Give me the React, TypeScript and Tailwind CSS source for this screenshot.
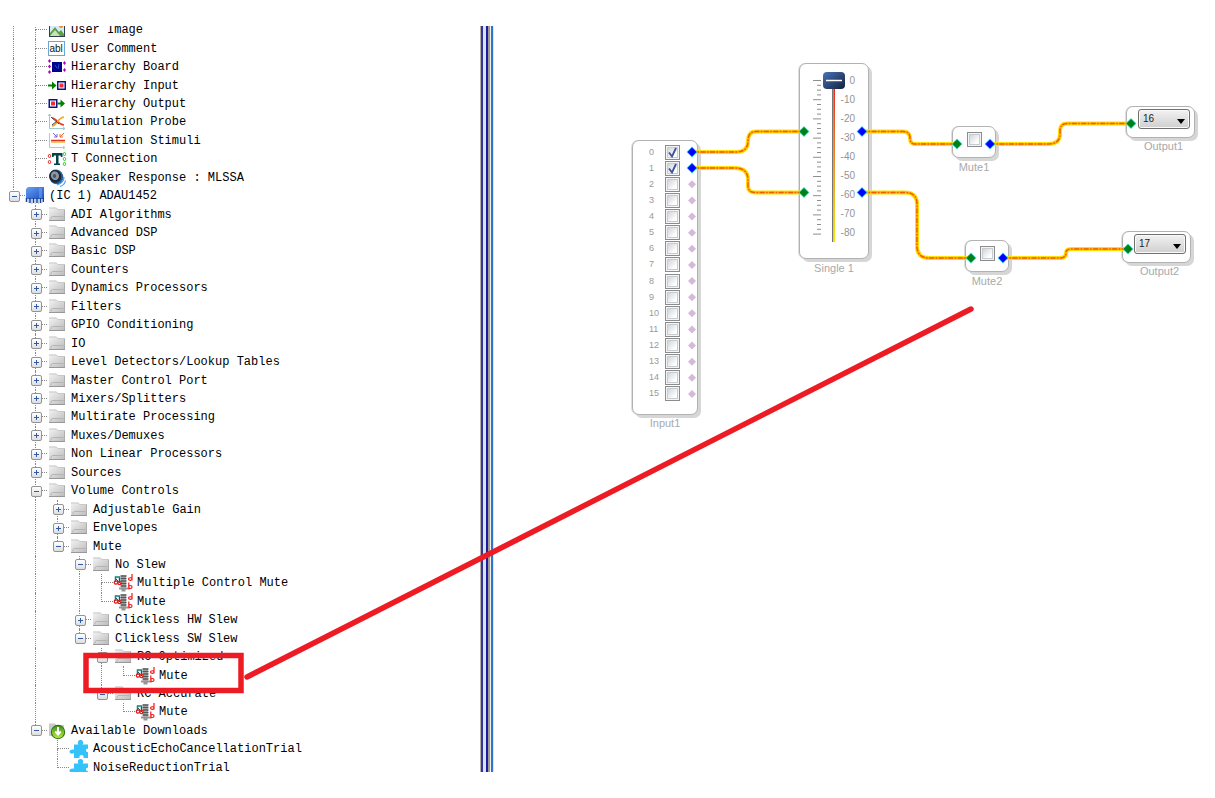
import React from "react";

type IconName =
  | "image" | "comment" | "board" | "hin" | "hout" | "probe" | "stimuli"
  | "tconn" | "speaker" | "chip" | "folder" | "mute" | "download" | "puzzle";

interface TreeNode {
  label: string;
  icon: IconName;
  closed?: boolean;
  children?: TreeNode[];
}

interface Row {
  node: TreeNode;
  trail: boolean[];
  last: boolean;
}

const closed = (label: string): TreeNode => ({ label, icon: "folder", closed: true });
const folder = (label: string, children: TreeNode[]): TreeNode => ({ label, icon: "folder", children });
const leaf = (label: string, icon: IconName): TreeNode => ({ label, icon });

const systemBlocks: TreeNode[] = [
  leaf("User Image", "image"),
  leaf("User Comment", "comment"),
  leaf("Hierarchy Board", "board"),
  leaf("Hierarchy Input", "hin"),
  leaf("Hierarchy Output", "hout"),
  leaf("Simulation Probe", "probe"),
  leaf("Simulation Stimuli", "stimuli"),
  leaf("T Connection", "tconn"),
  leaf("Speaker Response : MLSSA", "speaker"),
];

const processor: TreeNode = {
  label: "(IC 1) ADAU1452",
  icon: "chip",
  children: [
    closed("ADI Algorithms"),
    closed("Advanced DSP"),
    closed("Basic DSP"),
    closed("Counters"),
    closed("Dynamics Processors"),
    closed("Filters"),
    closed("GPIO Conditioning"),
    closed("IO"),
    closed("Level Detectors/Lookup Tables"),
    closed("Master Control Port"),
    closed("Mixers/Splitters"),
    closed("Multirate Processing"),
    closed("Muxes/Demuxes"),
    closed("Non Linear Processors"),
    closed("Sources"),
    folder("Volume Controls", [
      closed("Adjustable Gain"),
      closed("Envelopes"),
      folder("Mute", [
        folder("No Slew", [leaf("Multiple Control Mute", "mute"), leaf("Mute", "mute")]),
        closed("Clickless HW Slew"),
        folder("Clickless SW Slew", [
          folder("RC Optimized", [leaf("Mute", "mute")]),
          folder("RC Accurate", [leaf("Mute", "mute")]),
        ]),
      ]),
    ]),
    {
      label: "Available Downloads",
      icon: "download",
      children: [leaf("AcousticEchoCancellationTrial", "puzzle"), leaf("NoiseReductionTrial", "puzzle")],
    },
  ],
};

function flatten(nodes: TreeNode[], trail: boolean[]): Row[] {
  return nodes.flatMap((node, i) => {
    const last = i === nodes.length - 1;
    return [{ node, trail, last }, ...flatten(node.children ?? [], [...trail, !last])];
  });
}

const rows: Row[] = [...flatten(systemBlocks, [true]), ...flatten([processor], [])];

function Icon({ name }: { name: IconName }) {
  return (
    <svg viewBox="0 0 20 18" className="h-[18px] w-5 shrink-0" aria-hidden="true">
      {name === "folder" && (
        <>
          <path d="M2 1.500h7l1 2h8v11H2z" fill="url(#folderFill)" />
          <path d="M2 2h7.500l1 1.500H18" fill="none" stroke="#c8c8c8" />
          <path d="M2 14.500h16" stroke="#989898" />
          <path d="M4 13.500v-2l1.500-1h11" fill="none" stroke="#b4b4b4" />
          <path d="M17.500 4v10" stroke="#adadad" />
        </>
      )}
      {name === "image" && (
        <>
          <rect x="2.500" y="1.500" width="15" height="14" fill="#d6ecf8" stroke="#303d50" />
          <circle cx="14" cy="5" r="2" fill="#f08a24" />
          <path d="M3 15v-3l5-6 4 5 2-2 3 4v2z" fill="#5f9e48" />
          <path d="M3 15l5-6 5 6z" fill="#c7e3b4" />
        </>
      )}
      {name === "comment" && (
        <>
          <rect x="1.500" y="1.500" width="16" height="14" fill="#fff" stroke="#6aa5de" />
          <text x="2.500" y="12" fontSize="10" fontFamily="Liberation Sans, sans-serif" fill="#111">abl</text>
        </>
      )}
      {name === "board" && (
        <>
          <rect x="5" y="4" width="10" height="10" fill="#00008c" />
          <path d="M8 7l2 3M12 6l-1 5" stroke="#2d49d6" />
          <path d="M2.500 1l1.500 2-1.500 2L1 3zM2.500 6.500L4 8.500l-1.500 2L1 8.500zM2.500 12L4 14l-1.500 2L1 14zM17.500 3L19 5l-1.500 2L16 5zM17.500 10l1.500 2-1.500 2-1.500-2z" fill="#b000b8" />
        </>
      )}
      {name === "hin" && (
        <>
          <path d="M1 7.500h4V4.500l4.500 4-4.500 4v-3H1z" fill="#008000" />
          <rect x="10.750" y="4.750" width="7.500" height="7.500" fill="#fff" stroke="#10108c" strokeWidth="1.500" />
          <rect x="12.500" y="6.500" width="4" height="4" fill="#f03030" />
        </>
      )}
      {name === "hout" && (
        <>
          <rect x="2.250" y="4.750" width="7.500" height="7.500" fill="#fff" stroke="#10108c" strokeWidth="1.500" />
          <rect x="4" y="6.500" width="4" height="4" fill="#f03030" />
          <path d="M10.500 7.500h3V4.500l4.500 4-4.500 4v-3h-3z" fill="#008000" />
        </>
      )}
      {name === "probe" && (
        <>
          <path d="M2.500 1v14.500H18M1 3l1.500-2L4 3M16 14l2 1.500-2 1.500" fill="none" stroke="#9fcaca" />
          <path d="M5 5c5 0 6 7 12 7" fill="none" stroke="#e83b20" strokeWidth="1.500" />
          <path d="M5 13c5 0 5-8 12-9" fill="none" stroke="#f0a818" strokeWidth="1.600" />
          <path d="M4 4l8 7M5 12l5-4" stroke="#446" />
        </>
      )}
      {name === "stimuli" && (
        <>
          <path d="M2.500 1v14.500H18M16 14l2 1.500-2 1.500" fill="none" stroke="#c0c4c4" />
          <path d="M4 8.500h14" stroke="#e03020" strokeWidth="1.500" />
          <path d="M4 10h14" stroke="#f5b53c" strokeWidth="1.500" />
          <path d="M6 1l4 4M10 2v3H7" fill="none" stroke="#7a63c7" />
          <path d="M17 1l-4 4M13 2v3h3" fill="none" stroke="#f06a20" />
        </>
      )}
      {name === "tconn" && (
        <>
          <path d="M5 3h10.500v4H14l-.500-1.500h-2V13.500h1.500V15h-6v-1.500H9V5.500H7L6.500 7H5z" fill="#00464a" />
          <path d="M2.500 4L4 6 2.500 8 1 6zM2.500 10L4 12l-1.500 2L1 12z" fill="#fff" stroke="#f03030" />
          <path d="M17.500 2L19 4l-1.500 2L16 4zM17.500 7L19 9l-1.500 2L16 9zM17.500 12l1.500 2-1.500 2-1.500-2z" fill="#fff" stroke="#38d838" />
        </>
      )}
      {name === "speaker" && (
        <>
          <ellipse cx="9.500" cy="8" rx="7" ry="7.500" fill="#27679f" transform="rotate(-20 9 8.500)" />
          <ellipse cx="8.500" cy="7.500" rx="6" ry="6.500" fill="#1f2933" transform="rotate(-20 8 8)" />
          <ellipse cx="8" cy="7" rx="4" ry="4.500" fill="#8b98a3" transform="rotate(-20 7 7)" />
          <ellipse cx="7.500" cy="7" rx="1.700" ry="2" fill="#4a5660" />
          <path d="M10 16c5-1 7-5 7-8M13 17.500c3-1 5-3 5.500-6" fill="none" stroke="#4d9de8" strokeWidth="1.200" />
        </>
      )}
      {name === "chip" && (
        <>
          <path d="M3 0h16v12H1V2z" fill="url(#chipFill)" />
          <path d="M14 1h3v10h-3z" fill="#78aafa" opacity=".5" />
          <path d="M1.500 11v4M5 11v5M8.500 11v5M12 11v5M15.500 11v5M18.300 11v4" stroke="#1a4296" strokeWidth="1.500" />
          <path d="M3.200 12v4M6.800 12v5M10.200 12v5M13.700 12v5M17 12v4" stroke="#a9bbe2" />
        </>
      )}
      {name === "mute" && (
        <>
          <path d="M8 1.500h5v13H8z" fill="#b9b9b9" />
          <path d="M7.500 2h6M7.500 4.500h6M7.500 7h6M7.500 9.500h6M7.500 12h6" stroke="#555" strokeWidth="1.400" />
          <path d="M6 14.500h9M8.500 16.300h4" stroke="#969696" strokeWidth="2.200" />
          <path d="M2.500 8V3h4v5" fill="none" stroke="#178080" strokeWidth="1.500" />
          <path d="M3 5l5 5M6.500 4v3" stroke="#205060" />
          <circle cx="3" cy="8.500" r="1.700" fill="none" stroke="#e02020" strokeWidth="1.300" />
          <circle cx="6.500" cy="9" r="1.600" fill="none" stroke="#e02020" strokeWidth="1.300" />
          <path d="M19 0v6.500M19 5c0 2-3.500 1.500-3.500 0s3.500-1.800 3.500 0M15.800 8.500v7M15.800 13c0-2 3.200-2 3.200 0s-3.200 2-3.200 0" fill="none" stroke="#f01818" strokeWidth="1.200" />
        </>
      )}
      {name === "download" && (
        <>
          <path d="M2 1.500h6l1 1.500h8v11H2z" fill="#c9c9c9" />
          <circle cx="11" cy="10" r="7.200" fill="#2f6d16" />
          <circle cx="11" cy="10" r="6.200" fill="url(#greenFill)" />
          <path d="M11 5v7M8.300 9.500l2.700 3 2.700-3" fill="none" stroke="#fff" strokeWidth="2" />
        </>
      )}
      {name === "puzzle" && (
        <path d="M5 4.500h4.500C8 2.500 9 0 11.500 0S15 2.500 13.500 4.500H19v4.500c-1.500-.5-2 .5-2 1.500s1 2 2 1.500V18h-4.500c.5-2-.5-3-2-3s-2.500 1-2 3H5v-5c-1 1-4.500 1-4.500-1.200S4 9 5 10z" fill="#33c3fa" />
      )}
    </svg>
  );
}

function Branch({ row }: { row: Row }) {
  const { node, last } = row;
  const hasToggle = Boolean(node.closed || node.children);
  return (
    <span className="relative flex w-[22px] shrink-0 flex-col pl-[10px]">
      <span className="h-1/2 border-b border-l border-dotted border-[#888]" />
      <span className={`h-1/2 border-dotted border-[#888] ${last ? "" : "border-l"}`} />
      {hasToggle && (
        <button
          type="button"
          aria-label={`${node.closed ? "Expand" : "Collapse"} ${node.label}`}
          className="absolute inset-0 m-auto flex h-[11px] w-[11px] items-center justify-center rounded-[2px] border border-[#939393] bg-linear-to-b from-white to-[#dedede]"
        >
          <svg viewBox="0 0 7 7" className="h-[7px] w-[7px]" aria-hidden="true">
            <path d={node.closed ? "M1 3.500h5M3.500 1v5" : "M1 3.500h5"} stroke="#3358a8" />
          </svg>
        </button>
      )}
    </span>
  );
}

function TreeRow({ row }: { row: Row }) {
  return (
    <li className="flex min-h-0 pl-[3px]">
      {row.trail.map((on, i) => (
        <span key={i} className="flex w-[22px] shrink-0 pl-[10px]">
          <span className={`border-dotted border-[#888] ${on ? "border-l" : ""}`} />
        </span>
      ))}
      <Branch row={row} />
      <span className="flex items-center gap-1">
        <Icon name={row.node.icon} />
        <span className="whitespace-pre leading-[14px]">{row.node.label}</span>
      </span>
    </li>
  );
}

function Splitter() {
  return (
    <div className="flex w-[14px] shrink-0" role="separator" aria-orientation="vertical">
      <span className="w-px bg-[#b4b0a8]" />
      <span className="w-[2px] bg-[#3434a0]" />
      <span className="w-[3px] bg-[#d4e4fc]" />
      <span className="w-[2px] bg-[#1c1c9c]" />
      <span className="w-[2px] bg-[#a09c98]" />
      <span className="w-px bg-[#f4f0e8]" />
      <span className="w-[2px] bg-[#2f74d0]" />
      <span className="w-px bg-[#d8e8f8]" />
    </div>
  );
}

function Check({ label, checked = false }: { label: string; checked?: boolean }) {
  return (
    <label className="relative block h-[15px] w-[15px] shrink-0">
      <input
        type="checkbox"
        aria-label={label}
        defaultChecked={checked}
        className="peer block h-[15px] w-[15px] appearance-none border border-[#8c8c8c] bg-linear-to-br from-[#c3c8d0] to-white to-70% shadow-[inset_0_0_0_1px_#f4f4f4,inset_0_0_0_2px_#c8ccd0]"
      />
      <svg viewBox="0 0 15 15" className="pointer-events-none absolute inset-0 hidden peer-checked:block" aria-hidden="true">
        <path d="M4 7.500l3 4 4-8.500" fill="none" stroke="#3f57a0" strokeWidth="1.900" />
      </svg>
    </label>
  );
}

const box = "rounded-[7px] border border-[#b2b2b2] bg-white shadow-[3px_3px_0_0_#d6d6d6,-1px_0_0_0_#dedede]";
const caption = "text-center text-[11px] leading-[14px] text-[#a9a9a9]";

function InputBlock() {
  return (
    <section className="absolute left-[138px] top-[140px] w-[66px]">
      <div className={`flex h-[275px] flex-col pt-[3px] pb-3 pl-[16px] ${box}`}>
        {Array.from({ length: 16 }, (_, i) => (
          <div key={i} className="flex min-h-0 flex-1 items-center">
            <span className="w-4 text-[9px] leading-none text-[#999]">{i}</span>
            <Check label={`Input ${i}`} checked={i < 2} />
          </div>
        ))}
      </div>
      <p className={`pt-px ${caption}`}>Input1</p>
    </section>
  );
}

function FaderBlock() {
  return (
    <section className="absolute left-[305px] top-[63px] w-[70px]">
      <div className={`relative flex h-[196px] justify-end pt-[7px] pr-[13px] ${box}`}>
        <svg viewBox="0 0 68 194" className="absolute inset-0 h-[194px] w-[68px]" aria-hidden="true">
          {Array.from({ length: 33 }, (_, i) => (
            <path key={i} d={`M${i % 4 ? 17 : 13} ${16.5 + i * 4.8}H21`} stroke="#8e8e8e" />
          ))}
          <rect x="32" y="8" width="1.500" height="170" fill="#777" />
          <rect x="33.500" y="12" width="1.500" height="166" fill="url(#trackFill)" />
          <rect x="23" y="8" width="22" height="17" rx="4" fill="url(#knobFill)" />
          <path d="M26 16.500h16" stroke="#fff" strokeWidth="1.500" />
        </svg>
        <div className="flex h-[172px] flex-col text-right text-[10px] leading-none text-[#949494]">
          {[0, -10, -20, -30, -40, -50, -60, -70, -80].map((v) => (
            <span key={v} className="flex flex-1 items-center justify-end">{v}</span>
          ))}
        </div>
        <input
          type="range"
          min={-80}
          max={0}
          defaultValue={0}
          aria-label="Single 1 level"
          className="absolute top-[8px] left-[23px] h-[170px] w-[22px] opacity-0 [direction:rtl] [writing-mode:vertical-lr]"
        />
      </div>
      <p className={`pt-[2px] ${caption}`}>Single 1</p>
    </section>
  );
}

function MuteBlock({ name, place }: { name: string; place: string }) {
  return (
    <section className={`absolute w-[44px] ${place}`}>
      <div className={`flex h-[32px] justify-center pt-[5px] ${box}`}>
        <Check label={name} />
      </div>
      <p className={`pt-[2px] ${caption}`}>{name}</p>
    </section>
  );
}

function OutputBlock({ name, value, place }: { name: string; value: string; place: string }) {
  return (
    <section className={`absolute w-[69px] ${place}`}>
      <div className={`h-[32px] pt-[2px] pl-[11px] ${box}`}>
        <div className="relative w-[52px]">
          <select
            aria-label={name}
            defaultValue={value}
            className="block h-[20px] w-full appearance-none rounded-[3px] border border-[#707070] bg-linear-to-b from-[#f2f2f2] to-[#cfcfcf] pl-1 text-[10px] leading-none text-[#222] shadow-[inset_0_0_0_1px_#fafafa]"
          >
            <option>16</option>
            <option>17</option>
          </select>
          <svg viewBox="0 0 8 5" className="pointer-events-none absolute right-[5px] bottom-[5px] h-[5px] w-2" aria-hidden="true">
            <path d="M0 0h8L4 5z" fill="#000" />
          </svg>
        </div>
      </div>
      <p className={`pt-px pl-[6px] ${caption}`}>{name}</p>
    </section>
  );
}

const wires = [
  "M197 152H242Q254 152 254 141Q254 131.500 262 131.500H310",
  "M197 168H241Q254 168 254 180V186Q254 192.500 261 192.500H310",
  "M368 131.500H409Q416 131.500 416 138Q416 144 421 144H463",
  "M368 192.500H411Q423 192.500 423 204V246Q423 258 435 258H477",
  "M496 144H554Q566 144 566 134V131Q566 123.500 573 123.500H637",
  "M509 258H566Q572 258 572 253Q572 249 577 249H634",
];

const inPorts = [[310, 131.5], [310, 192.5], [463, 144], [477, 258], [637, 123.5], [634, 249]];
const outPorts = [[198, 152], [198, 168], [368, 131.5], [368, 192.5], [496, 144], [509, 258]];

function Port({ x, y, fill, glow }: { x: number; y: number; fill: string; glow: string }) {
  return (
    <g transform={`translate(${x} ${y})`}>
      <path d="M0-5.500L5.500 0 0 5.500-5.500 0z" fill={glow} />
      <path d="M0-4.500L4.500 0 0 4.500-4.500 0z" fill={fill} />
    </g>
  );
}

function Wiring() {
  return (
    <svg className="pointer-events-none absolute inset-0 h-full w-full" aria-hidden="true">
      {wires.map((d) => (
        <g key={d} fill="none">
          <path d={d} stroke="#ffe000" strokeWidth="4" />
          <path d={d} stroke="#ffb400" strokeWidth="2" />
          <path d={d} stroke="#f25a00" strokeWidth="1.400" strokeDasharray="5 1.500 1.500 1.500" />
        </g>
      ))}
      {Array.from({ length: 14 }, (_, i) => (
        <path key={i} d="M0-4L4 0 0 4-4 0z" fill="#d5b9da" transform={`translate(198 ${184.3 + i * 16.13})`} />
      ))}
      {inPorts.map(([x, y]) => <Port key={`${x}-${y}`} x={x} y={y} fill="#008018" glow="#40e0d0" />)}
      {outPorts.map(([x, y]) => <Port key={`${x}-${y}`} x={x} y={y} fill="#0000ff" glow="#30d8ff" />)}
    </svg>
  );
}

function Gradients() {
  return (
    <svg className="absolute h-0 w-0" aria-hidden="true">
      <defs>
        <linearGradient id="folderFill" x1="0" y1="0" x2="1" y2="1">
          <stop offset="0" stopColor="#f4f4f4" />
          <stop offset="1" stopColor="#bababa" />
        </linearGradient>
        <linearGradient id="chipFill" x1="0" y1="0" x2="1" y2="1">
          <stop offset="0" stopColor="#6aa2f2" />
          <stop offset="1" stopColor="#1c4fc0" />
        </linearGradient>
        <linearGradient id="greenFill" x1="0" y1="0" x2="0" y2="1">
          <stop offset="0" stopColor="#3f9420" />
          <stop offset="1" stopColor="#b5ea3a" />
        </linearGradient>
        <linearGradient id="trackFill" x1="0" y1="0" x2="0" y2="1">
          <stop offset="0" stopColor="#f01818" />
          <stop offset=".5" stopColor="#ee8a20" />
          <stop offset="1" stopColor="#f5ee10" />
        </linearGradient>
        <linearGradient id="knobFill" x1="0" y1="0" x2="1" y2="1">
          <stop offset="0" stopColor="#4773b8" />
          <stop offset="1" stopColor="#14203c" />
        </linearGradient>
      </defs>
    </svg>
  );
}

export default function App() {
  return (
    <div className="relative flex min-h-screen overflow-hidden bg-white font-['Liberation_Sans',sans-serif]">
      <Gradients />
      <aside className="flex w-[494px] shrink-0 py-[26px]">
        <nav className="flex w-[480px] overflow-hidden" aria-label="Toolbox">
          <ul className="-my-[5px] grid flex-1 auto-rows-[minmax(18px,1fr)] font-['Liberation_Mono',monospace] text-[12px] text-black">
            {rows.map((row, i) => <TreeRow key={i} row={row} />)}
          </ul>
        </nav>
        <Splitter />
      </aside>
      <main className="relative flex-1">
        <InputBlock />
        <FaderBlock />
        <MuteBlock name="Mute1" place="left-[458px] top-[126px]" />
        <MuteBlock name="Mute2" place="left-[471px] top-[240px]" />
        <OutputBlock name="Output1" value="16" place="left-[632px] top-[106px]" />
        <OutputBlock name="Output2" value="17" place="left-[628px] top-[231px]" />
        <Wiring />
      </main>
      <svg className="pointer-events-none absolute inset-0 h-full w-full" aria-hidden="true">
        <rect x="86" y="655.500" width="155" height="35" fill="none" stroke="#ed1c24" strokeWidth="5.500" />
        <path d="M247 677L971 309" stroke="#ed1c24" strokeWidth="5.500" strokeLinecap="round" />
      </svg>
    </div>
  );
}
